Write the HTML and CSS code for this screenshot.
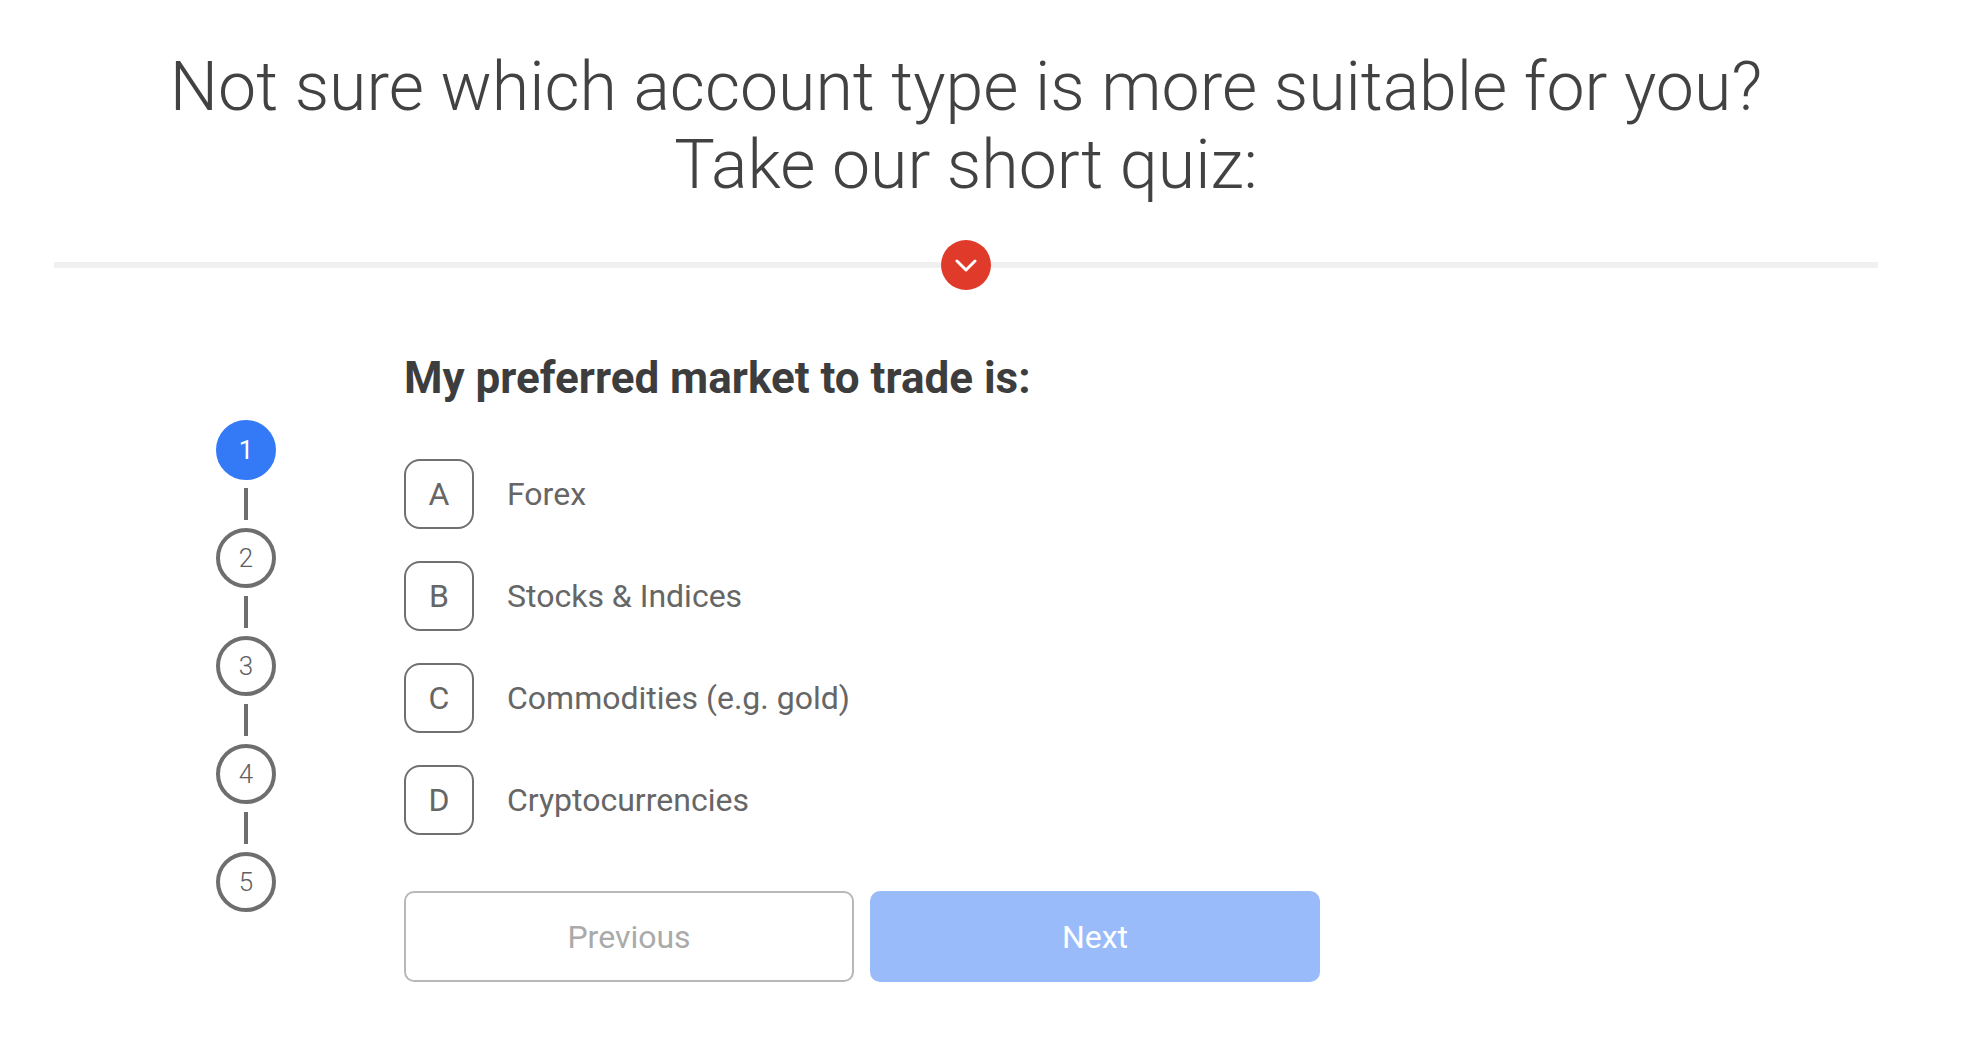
FILE: index.html
```html
<!DOCTYPE html>
<html lang="en">
<head>
<meta charset="utf-8">
<title>Account type quiz</title>
<link rel="stylesheet" href="styles.css">
</head>
<body>
<div class="page">
  <h1 class="title">Not sure which account type is more suitable for you?<br>Take our short quiz:</h1>
  <div class="divider">
    <span class="divider-btn">
      <svg width="22" height="14" viewBox="0 0 22 14"><path d="M2 2 L11 11 L20 2" fill="none" stroke="#fff" stroke-width="3" stroke-linecap="round" stroke-linejoin="round"/></svg>
    </span>
  </div>
  <div class="quiz">
    <div class="steps">
      <div class="step active">1</div>
      <div class="connector"></div>
      <div class="step">2</div>
      <div class="connector"></div>
      <div class="step">3</div>
      <div class="connector"></div>
      <div class="step">4</div>
      <div class="connector"></div>
      <div class="step">5</div>
    </div>
    <div class="content">
      <h2 class="question">My preferred market to trade is:</h2>
      <div class="options">
        <div class="option"><span class="letter">A</span><span class="label">Forex</span></div>
        <div class="option"><span class="letter">B</span><span class="label">Stocks &amp; Indices</span></div>
        <div class="option"><span class="letter">C</span><span class="label">Commodities (e.g. gold)</span></div>
        <div class="option"><span class="letter">D</span><span class="label">Cryptocurrencies</span></div>
      </div>
      <div class="actions">
        <button class="btn btn-prev">Previous</button>
        <button class="btn btn-next">Next</button>
      </div>
    </div>
  </div>
</div>
</body>
</html>
```

FILE: styles.css
```css
html, body {
  margin: 0;
  padding: 0;
  background: #ffffff;
}

body {
  font-family: Roboto, "Liberation Sans", Arial, sans-serif;
  color: #444444;
}

.page {
  width: 1824px;
  margin-left: 54px;
}

.title {
  margin: 48px 0 0;
  font-size: 68px;
  font-weight: 300;
  line-height: 78px;
  text-align: center;
  color: #424242;
}

.divider {
  margin-top: 36px;
  height: 50px;
  display: flex;
  justify-content: center;
  align-items: center;
  background: linear-gradient(#f0f0f0, #f0f0f0) center / 100% 6px no-repeat;
}

.divider-btn {
  width: 50px;
  height: 50px;
  border-radius: 50%;
  background: #e03a2a;
  display: flex;
  justify-content: center;
  align-items: center;
}

.divider-btn svg {
  display: block;
  margin-top: 2px;
}

.quiz {
  margin-top: 63px;
  display: flex;
  align-items: flex-start;
}

.steps {
  margin-left: 162px;
  margin-top: 67px;
  width: 60px;
  display: flex;
  flex-direction: column;
  align-items: center;
}

.step {
  width: 60px;
  height: 60px;
  box-sizing: border-box;
  border: 4px solid #6e6e6e;
  border-radius: 50%;
  display: flex;
  justify-content: center;
  align-items: center;
  font-size: 26px;
  font-weight: 300;
  color: #606060;
}

.step.active {
  background: #3479f6;
  border-color: #3479f6;
  color: #ffffff;
  font-weight: 400;
}

.connector {
  width: 4px;
  height: 32px;
  margin: 8px 0;
  background: #6e6e6e;
}

.content {
  margin-left: 128px;
}

.question {
  margin: 0;
  font-size: 44px;
  font-weight: 700;
  line-height: 50px;
  color: #3d3d3d;
}

.options {
  margin-top: 56px;
  display: flex;
  flex-direction: column;
  gap: 32px;
}

.option {
  display: flex;
  align-items: center;
  gap: 33px;
}

.letter {
  width: 70px;
  height: 70px;
  box-sizing: border-box;
  border: 2px solid #707070;
  border-radius: 16px;
  display: flex;
  justify-content: center;
  align-items: center;
  font-size: 32px;
  color: #666666;
}

.label {
  font-size: 32px;
  color: #666666;
}

.actions {
  margin-top: 56px;
  display: flex;
  gap: 16px;
}

.btn {
  width: 450px;
  height: 91px;
  box-sizing: border-box;
  border-radius: 10px;
  font-family: Roboto, "Liberation Sans", Arial, sans-serif;
  font-size: 32px;
  cursor: pointer;
}

.btn-prev {
  background: #ffffff;
  border: 2px solid #b8b8b8;
  color: #aaaaaa;
}

.btn-next {
  background: #99bbf9;
  border: none;
  color: #ffffff;
}
```
